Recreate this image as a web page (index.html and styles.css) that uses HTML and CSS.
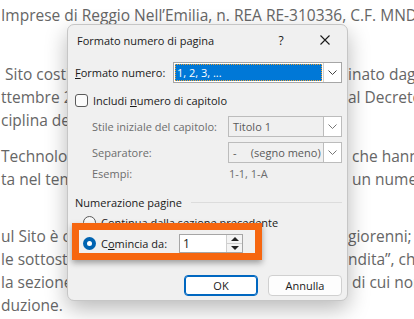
FILE: index.html
```html
<!DOCTYPE html>
<html lang="it">
<head>
    <meta charset="UTF-8">
    <title>Formato numero di pagina</title>
    <link rel="stylesheet" href="styles.css">
</head>
<body>
    <div class="doc">
        <p class="para">
            <span class="line"><span class="left wide">Imprese di Reggio Nell’Emilia, n. REA RE-310336, C.F. MND</span></span>
        </p>
        <p class="para p2">
            <span class="line"><span class="left">&nbsp;Sito costi</span><span class="right">inato dag</span></span>
            <span class="line"><span class="left">ttembre 2</span><span class="right">al Decreto</span></span>
            <span class="line"><span class="left">ciplina del</span><span class="right"></span></span>
        </p>
        <p class="para p3">
            <span class="line"><span class="left">Technolog</span><span class="right in">che hann</span></span>
            <span class="line"><span class="left">ta nel tem</span><span class="right in">un nume</span></span>
        </p>
        <p class="para p4">
            <span class="line"><span class="left">ul Sito è c</span><span class="right">giorenni;</span></span>
            <span class="line"><span class="left">le sottosta</span><span class="right">ndita”, ch</span></span>
            <span class="line"><span class="left">la sezione</span><span class="right in">di cui non</span></span>
            <span class="line"><span class="left">duzione.</span></span>
        </p>
    </div>

    <div class="dialog">
        <div class="titlebar">
            <span class="title">Formato numero di pagina</span>
            <span class="help">?</span>
            <span class="close">
                <svg width="10" height="10" viewBox="0 0 10 10"><path d="M0.5 0.5L9.5 9.5M9.5 0.5L0.5 9.5" stroke="#1a1a1a" stroke-width="1.1" fill="none"/></svg>
            </span>
        </div>
        <div class="content">
            <div class="row r-format">
                <label class="lbl"><u>F</u>ormato numero:</label>
                <div class="select active">
                    <span class="value"><span class="focus">1, 2, 3, ...</span></span>
                    <span class="chev"><svg width="9" height="5" viewBox="0 0 9 5"><path d="M0.5 0.5L4.5 4.5L8.5 0.5" stroke="#444" fill="none"/></svg></span>
                </div>
            </div>
            <div class="row r-check">
                <span class="check"></span>
                <span>Includi <u>n</u>umero di capitolo</span>
            </div>
            <div class="row r-sub r-style">
                <span class="lbl sub">Stile iniziale del capitolo:</span>
                <div class="select off">
                    <span class="value">Titolo 1</span>
                    <span class="chev"><svg width="9" height="5" viewBox="0 0 9 5"><path d="M0.5 0.5L4.5 4.5L8.5 0.5" stroke="#777" fill="none"/></svg></span>
                </div>
            </div>
            <div class="row r-sub r-sep">
                <span class="lbl sub">Separatore:</span>
                <div class="select off">
                    <span class="value">-&nbsp;&nbsp;&nbsp;&nbsp;&nbsp;(segno meno)</span>
                    <span class="chev"><svg width="9" height="5" viewBox="0 0 9 5"><path d="M0.5 0.5L4.5 4.5L8.5 0.5" stroke="#777" fill="none"/></svg></span>
                </div>
            </div>
            <div class="row r-sub r-ex">
                <span class="lbl sub">Esempi:</span>
                <span class="ex">1-1, 1-A</span>
            </div>
            <div class="group">
                <span>Numerazione pagine</span>
                <span class="rule"></span>
            </div>
            <div class="row r-radio r-cont">
                <span class="radio"></span>
                <span><u>C</u>ontinua dalla sezione precedente</span>
            </div>
            <div class="row r-radio r-start">
                <span class="radio on"></span>
                <span class="lbl-start">C<u>o</u>mincia da:</span>
                <div class="spin">
                    <span class="spin-val">1</span>
                    <span class="spin-btns">
                        <span class="arrow up"></span>
                        <span class="arrow down"></span>
                    </span>
                </div>
            </div>
            <div class="buttons">
                <button class="btn primary">OK</button>
                <button class="btn">Annulla</button>
            </div>
        </div>
        <div class="mark"></div>
    </div>
</body>
</html>
```

FILE: styles.css
```css
*{margin:0;padding:0;box-sizing:border-box;}
body{width:414px;height:319px;overflow:hidden;background:#fff;font-family:"Open Sans","Noto Sans",sans-serif;position:relative;}

.doc{padding-top:4px;color:#666;font-size:15.5px;}
.para{display:flex;flex-direction:column;}
.p2{margin-top:36px;}
.p3{margin-top:13px;}
.p4{margin-top:34px;}
.line{display:grid;grid-template-columns:67px 1fr;height:23px;line-height:23px;white-space:nowrap;}
.left{padding-left:1px;}
.left.wide{grid-column:1 / 3;}
.right{padding-left:281px;}
.right.in{padding-left:285px;}

.dialog{position:absolute;left:67px;top:24px;width:281px;height:277px;background:#f0f0f0;border:1px solid #c6c6c6;border-radius:7px;box-shadow:0 8px 22px rgba(0,0,0,.28);font-size:11px;color:#1a1a1a;}
.titlebar{height:30px;display:flex;align-items:center;padding-left:9px;}
.title{flex:1;}
.help{width:44px;text-align:center;font-size:12px;}
.close{width:44px;display:flex;justify-content:center;}
.close svg{display:block;}

.content{padding:0 5px 0 7px;}
.row{display:flex;align-items:center;}
.lbl{width:98px;}
.r-format{margin-top:7px;height:21px;}
.select{flex:1;height:21px;display:flex;border:1px solid #a6a6a6;background:#fff;}
.select .value{flex:1;display:flex;align-items:center;padding-left:4px;}
.select.active .value{padding:1px;}
.select.active .focus{flex:1;height:100%;background:#0078d7;color:#fff;padding-left:2px;display:flex;align-items:center;outline:1px dotted #f0a030;outline-offset:-1px;}
.select .chev{width:18px;border-left:1px solid #cfcfcf;display:flex;align-items:center;justify-content:center;background:#fff;}
.select.off{flex:none;width:114px;margin-left:auto;background:#f0f0f0;border-color:#bcbcbc;color:#5a5a5a;}
.select.off .chev{border-left-color:#bcbcbc;}

.r-check{margin-top:9px;height:17px;gap:5px;}
.check{width:13px;height:13px;border:1px solid #5a5a5a;border-radius:3px;background:#fbfbfb;}

.r-sub{padding-left:17px;color:#6d6d6d;}
.r-style{margin-top:7px;height:21px;}
.r-sep{margin-top:5px;height:21px;}
.r-ex{margin-top:2px;height:16px;}
.sub{width:137px;}
.ex{color:#6d6d6d;}

.group{margin-top:13px;height:16px;display:flex;align-items:center;gap:9px;}
.group .rule{flex:1;height:1px;background:#dcdcdc;}

.r-radio{padding-left:8px;gap:5px;}
.r-cont{margin-top:4px;height:16px;}
.r-start{margin-top:4px;height:19px;}
.radio{width:13px;height:13px;border:1px solid #5a5a5a;border-radius:50%;background:#f8f8f8;}
.radio.on{border:none;background:#0063b1;display:flex;align-items:center;justify-content:center;}
.radio.on::after{content:"";width:5px;height:5px;border-radius:50%;background:#fff;}
.lbl-start{width:73px;}
.spin{width:64px;height:19px;border:1px solid #a6a6a6;background:#fff;display:flex;}
.spin-val{flex:1;padding-left:3px;line-height:17px;font-size:12px;}
.spin-btns{width:16px;border-left:1px solid #cfcfcf;display:flex;flex-direction:column;background:#f4f4f4;}
.arrow{flex:1;display:flex;align-items:center;justify-content:center;}
.arrow.up{border-bottom:1px solid #cfcfcf;}
.arrow::after{content:"";border-left:4px solid transparent;border-right:4px solid transparent;}
.arrow.up::after{border-bottom:4px solid #222;}
.arrow.down::after{border-top:4px solid #222;}

.buttons{margin-top:22px;display:flex;justify-content:flex-end;gap:10px;}
.btn{width:74px;height:21px;font:inherit;color:#1a1a1a;background:#fdfdfd;border:1px solid #d0d0d0;border-radius:4px;}
.btn.primary{border:1px solid #0067c0;box-shadow:inset 0 0 0 1px #0067c0;background:#fff;}

.mark{position:absolute;left:4px;top:198px;width:190px;height:37px;border:7px solid #f6660f;box-shadow:0 3px 6px rgba(0,0,0,.35);}
```
